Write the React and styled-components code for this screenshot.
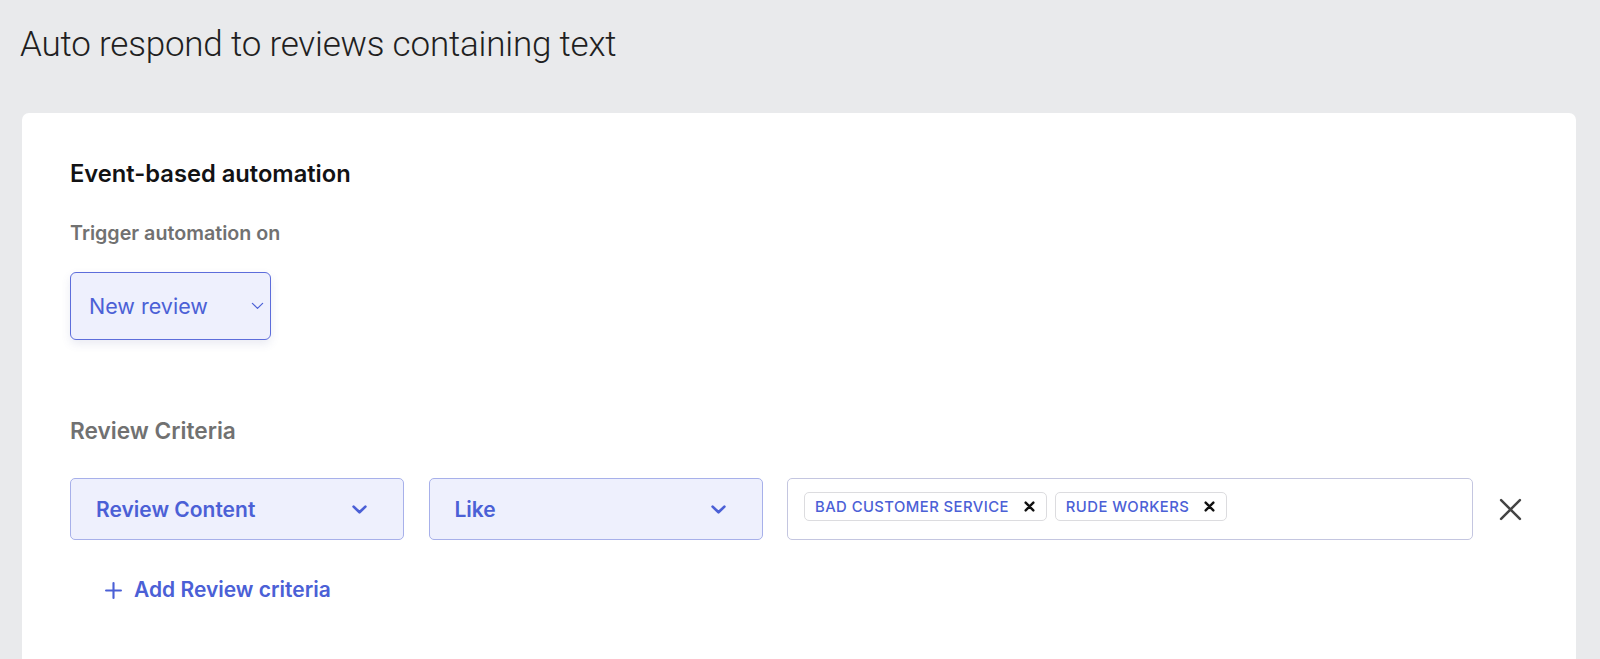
import React from "react";
import styled, { createGlobalStyle } from "styled-components";

const Global = createGlobalStyle`
  html, body { margin: 0; padding: 0; background: #e9eaec; }
  body { font-family: Inter, "Noto Sans", sans-serif; overflow: hidden; }
  * { box-sizing: border-box; }
`;

const Page = styled.div`
  min-height: 659px;
  padding: 22px 24px 0 22px;
`;

const Title = styled.h1`
  margin: 0 0 0 -2px;
  font-family: Roboto, "Liberation Sans", sans-serif;
  font-weight: 300;
  font-size: 35px;
  line-height: 46px;
  color: #1f1f22;
  letter-spacing: -0.2px;
`;

const Card = styled.section`
  margin-top: 45px;
  background: #fff;
  border-radius: 7px;
  height: 560px;
  padding: 46px 48px 0 48px;
`;

const Heading = styled.h2`
  margin: 0;
  font-size: 23.7px;
  line-height: 30px;
  font-weight: 600;
  color: #121214;
`;

const Label = styled.div`
  margin-top: ${(p) => p.$mt}px;
  font-size: ${(p) => p.$size}px;
  line-height: ${(p) => p.$lh}px;
  font-weight: 600;
  color: #717171;
`;

const TriggerSelect = styled.div`
  margin-top: 26px;
  width: 201px;
  height: 68px;
  border: 1.5px solid #5d6ddb;
  border-radius: 6px;
  background: #eef0fd;
  box-shadow: 0 4px 10px rgba(80, 90, 160, 0.12);
  display: flex;
  align-items: center;
  justify-content: space-between;
  padding: 0 6px 0 18px;
  font-size: 21.5px;
  color: #4b60d6;
`;

const Row = styled.div`
  margin-top: 33px;
  display: flex;
  align-items: center;
  gap: 24.5px;
`;

const Select = styled.div`
  flex: none;
  width: 334px;
  height: 62px;
  border: 1px solid #a7b0ea;
  border-radius: 5px;
  background: #eef0fd;
  display: flex;
  align-items: center;
  justify-content: space-between;
  padding: 0 36px 0 25px;
  font-size: 21px;
  font-weight: 600;
  color: #4b60d6;
`;

const TagField = styled.div`
  flex: none;
  width: 686px;
  height: 62px;
  border: 1px solid #c4c6e0;
  border-radius: 5px;
  background: #fff;
  display: flex;
  align-items: center;
  gap: 8px;
  padding: 0 15px 5px 16px;
`;

const Tag = styled.div`
  height: 29px;
  border: 1.5px solid #dcdcdf;
  border-radius: 5px;
  display: flex;
  align-items: center;
  gap: 15px;
  padding: 0 11px 0 10px;
  font-size: 14.8px;
  font-weight: 500;
  letter-spacing: 0.45px;
  color: #4b60d6;
`;

const CloseBtn = styled.button`
  flex: none;
  border: 0;
  background: none;
  padding: 0;
  width: 26px;
  height: 40px;
  display: flex;
  align-items: center;
  justify-content: center;
`;

const AddLink = styled.div`
  margin: 36px 0 0 35px;
  display: flex;
  align-items: center;
  gap: 12px;
  font-size: 21px;
  line-height: 28px;
  font-weight: 600;
  color: #4b60d6;
`;

const Chevron = ({ size = 15, w = 2.5 }) => (
  <svg width={size} height={size * 0.6} viewBox="0 0 14 8.4" fill="none">
    <path d="M1.5 1.5 L7 6.8 L12.5 1.5" stroke="#4b60d6" strokeWidth={w} strokeLinecap="round" strokeLinejoin="round" />
  </svg>
);

const SmallX = () => (
  <svg width="11" height="11" viewBox="0 0 10 10">
    <path d="M1.5 1.5 L8.5 8.5 M8.5 1.5 L1.5 8.5" stroke="#111" strokeWidth="2.2" strokeLinecap="round" />
  </svg>
);

export default function App() {
  return (
    <>
      <Global />
      <Page>
        <Title>Auto respond to reviews containing text</Title>
        <Card>
          <Heading>Event-based automation</Heading>
          <Label $mt={31} $size={19.7} $lh={26}>Trigger automation on</Label>
          <TriggerSelect>
            New review
            <Chevron size={13} w={1.3} />
          </TriggerSelect>
          <Label $mt={77} $size={22.7} $lh={28}>Review Criteria</Label>
          <Row>
            <Select>
              Review Content
              <Chevron />
            </Select>
            <Select>
              Like
              <Chevron />
            </Select>
            <TagField>
              <Tag>
                BAD CUSTOMER SERVICE
                <SmallX />
              </Tag>
              <Tag>
                RUDE WORKERS
                <SmallX />
              </Tag>
            </TagField>
            <CloseBtn aria-label="Remove">
              <svg width="23" height="23" viewBox="0 0 22 22">
                <path d="M2 2 L20 20 M20 2 L2 20" stroke="#444" strokeWidth="2.4" strokeLinecap="round" />
              </svg>
            </CloseBtn>
          </Row>
          <AddLink>
            <svg width="17" height="17" viewBox="0 0 16 16">
              <path d="M8 1 V15 M1 8 H15" stroke="#4b60d6" strokeWidth="2" strokeLinecap="round" />
            </svg>
            Add Review criteria
          </AddLink>
        </Card>
      </Page>
    </>
  );
}
